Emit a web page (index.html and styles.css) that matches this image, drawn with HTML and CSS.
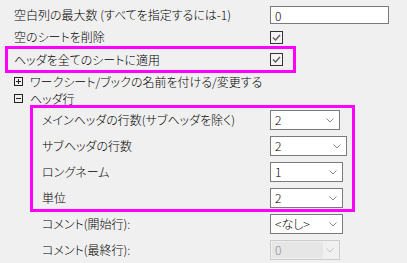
FILE: index.html
```html
<!DOCTYPE html>
<html lang="ja">
 <head>
  <meta charset="UTF-8">
  <title>ヘッダ設定</title>
  <link rel="stylesheet" href="styles.css">
 </head>
<body>

<div class="panel">

 <div class="row r22">
  <span class="label">空白列の最大数 (すべてを指定するには-1)</span>
  <input type="text" class="eingabe" value="0" readonly="readonly" tabindex="-1">
 </div>

 <div class="row r22">
  <span class="label">空のシートを削除</span>
  <span class="check"><svg width="11" height="11" viewBox="0 0 11 11"><path d="M2 5.5 L4.5 8 L9 3" fill="none" stroke="#5c5c5c" stroke-width="1.4"/></svg></span>
 </div>

 <!-- markiert 1 -->
 <div class="mark mark1">
  <div class="row r21">
   <span class="label">ヘッダを全てのシートに適用</span>
   <span class="check"><svg width="11" height="11" viewBox="0 0 11 11"><path d="M2 5.5 L4.5 8 L9 3" fill="none" stroke="#5c5c5c" stroke-width="1.4"/></svg></span>
  </div>
 </div>

 <div class="row tree">
  <svg class="knoten" width="9" height="9" viewBox="0 0 9 9"><rect x="0.5" y="0.5" width="8" height="8" fill="none" stroke="#222"/><path d="M2 4.5 H7 M4.5 2 V7" stroke="#222"/></svg>
  <span>ワークシート/ブックの名前を付ける/変更する</span>
 </div>

 <div class="row tree">
  <svg class="knoten" width="9" height="9" viewBox="0 0 9 9"><rect x="0.5" y="0.5" width="8" height="8" fill="none" stroke="#222"/><path d="M2 4.5 H7" stroke="#222"/></svg>
  <span>ヘッダ行</span>
 </div>

 <!-- markiert 2 -->
 <div class="mark mark2">
  <div class="row r26">
   <span class="label">メインヘッダの行数(サブヘッダを除く)</span>
   <div class="auswahl w70"><span>2</span><svg width="8" height="5" viewBox="0 0 8 5"><path d="M0.5 0.5 L4 4 L7.5 0.5" fill="none" stroke="#8a8a8a"/></svg></div>
  </div>
  <div class="row r26">
   <span class="label">サブヘッダの行数</span>
   <div class="auswahl w77"><span>2</span><svg width="8" height="5" viewBox="0 0 8 5"><path d="M0.5 0.5 L4 4 L7.5 0.5" fill="none" stroke="#8a8a8a"/></svg></div>
  </div>
  <div class="row r26">
   <span class="label">ロングネーム</span>
   <div class="auswahl w73"><span>1</span><svg width="8" height="5" viewBox="0 0 8 5"><path d="M0.5 0.5 L4 4 L7.5 0.5" fill="none" stroke="#8a8a8a"/></svg></div>
  </div>
  <div class="row r23">
   <span class="label">単位</span>
   <div class="auswahl w73"><span>2</span><svg width="8" height="5" viewBox="0 0 8 5"><path d="M0.5 0.5 L4 4 L7.5 0.5" fill="none" stroke="#8a8a8a"/></svg></div>
  </div>
 </div>

 <div class="row r26 sub">
  <span class="label">コメント(開始行):</span>
  <div class="auswahl w73"><span>&lt;なし&gt;</span><svg width="8" height="5" viewBox="0 0 8 5"><path d="M0.5 0.5 L4 4 L7.5 0.5" fill="none" stroke="#8a8a8a"/></svg></div>
 </div>

 <div class="row r26 sub">
  <span class="label">コメント(最終行):</span>
  <div class="auswahl w70 aus"><span class="wert">0</span><svg width="8" height="5" viewBox="0 0 8 5"><path d="M0.5 0.5 L4 4 L7.5 0.5" fill="none" stroke="#c4c4c4"/></svg></div>
 </div>

</div>

</body>
</html>
```

FILE: styles.css
```css
body {
 margin: 0;
 background: #F0F0F0;
 font-family: "Noto Sans CJK JP", "DejaVu Sans", Sans-Serif;
 font-size: 12px;
 font-weight: 300;
 font-feature-settings: "palt";
 color: #000000;
}

.panel {
 padding-top: 4px;
}

/* Zeilen */
.row {
 display: flex;
 align-items: center;
 padding-left: 14px;
 white-space: nowrap;
}

.r22 { height: 22px; }
.r21 { height: 21px; }

.r26,
.r23 {
 height: 26px;
 align-items: flex-start;
 padding-top: 2px;
 box-sizing: border-box;
}

.r23 { height: 23px; }

.label {
 flex: 0 0 256px;
 line-height: 20px;
}

.r22 .label,
.r21 .label {
 line-height: 22px;
}

/* Baum */
.tree {
 height: 17px;
}

.knoten {
 display: block;
 margin-right: 7px;
}

/* Markierung */
.mark {
 border: Solid 3px #FF00FF;
 margin-top: -2px;
}

.mark1 {
 margin-left: 5px;
 width: 285px;
}

.mark1 .row {
 padding-left: 6px;
}

.mark2 {
 margin-left: 30px;
 width: 319px;
}

.mark2 .row {
 padding-left: 9px;
}

.mark2 .label {
 flex-basis: 228px;
}

.sub {
 padding-left: 42px;
}

.sub .label {
 flex-basis: 228px;
}

/* Felder */
input.eingabe {
 box-sizing: border-box;
 width: 119px;
 height: 18px;
 margin: 0;
 padding: 0 0 0 4px;
 border: Solid 1px #7A7A7A;
 background: #FFFFFF;
 font: inherit;
 outline: 0;
}

.check {
 box-sizing: border-box;
 width: 13px;
 height: 13px;
 border: Solid 1px #333333;
 background: #F4F4F4;
 display: flex;
}

.auswahl {
 box-sizing: border-box;
 height: 20px;
 border: Solid 1px #7A7A7A;
 background: #FFFFFF;
 display: flex;
 align-items: center;
 justify-content: space-between;
 padding: 0 5px 0 4px;
 line-height: 18px;
}

.w70 { width: 70px; }
.w73 { width: 73px; }
.w77 { width: 77px; }

.auswahl.aus {
 border-color: #CCCCCC;
 background: #F0F0F0;
 padding-left: 1px;
 color: #8A8A8A;
}

.wert {
 background: #E6E6E6;
 width: 48px;
 height: 16px;
 line-height: 16px;
 padding-left: 3px;
}
```
